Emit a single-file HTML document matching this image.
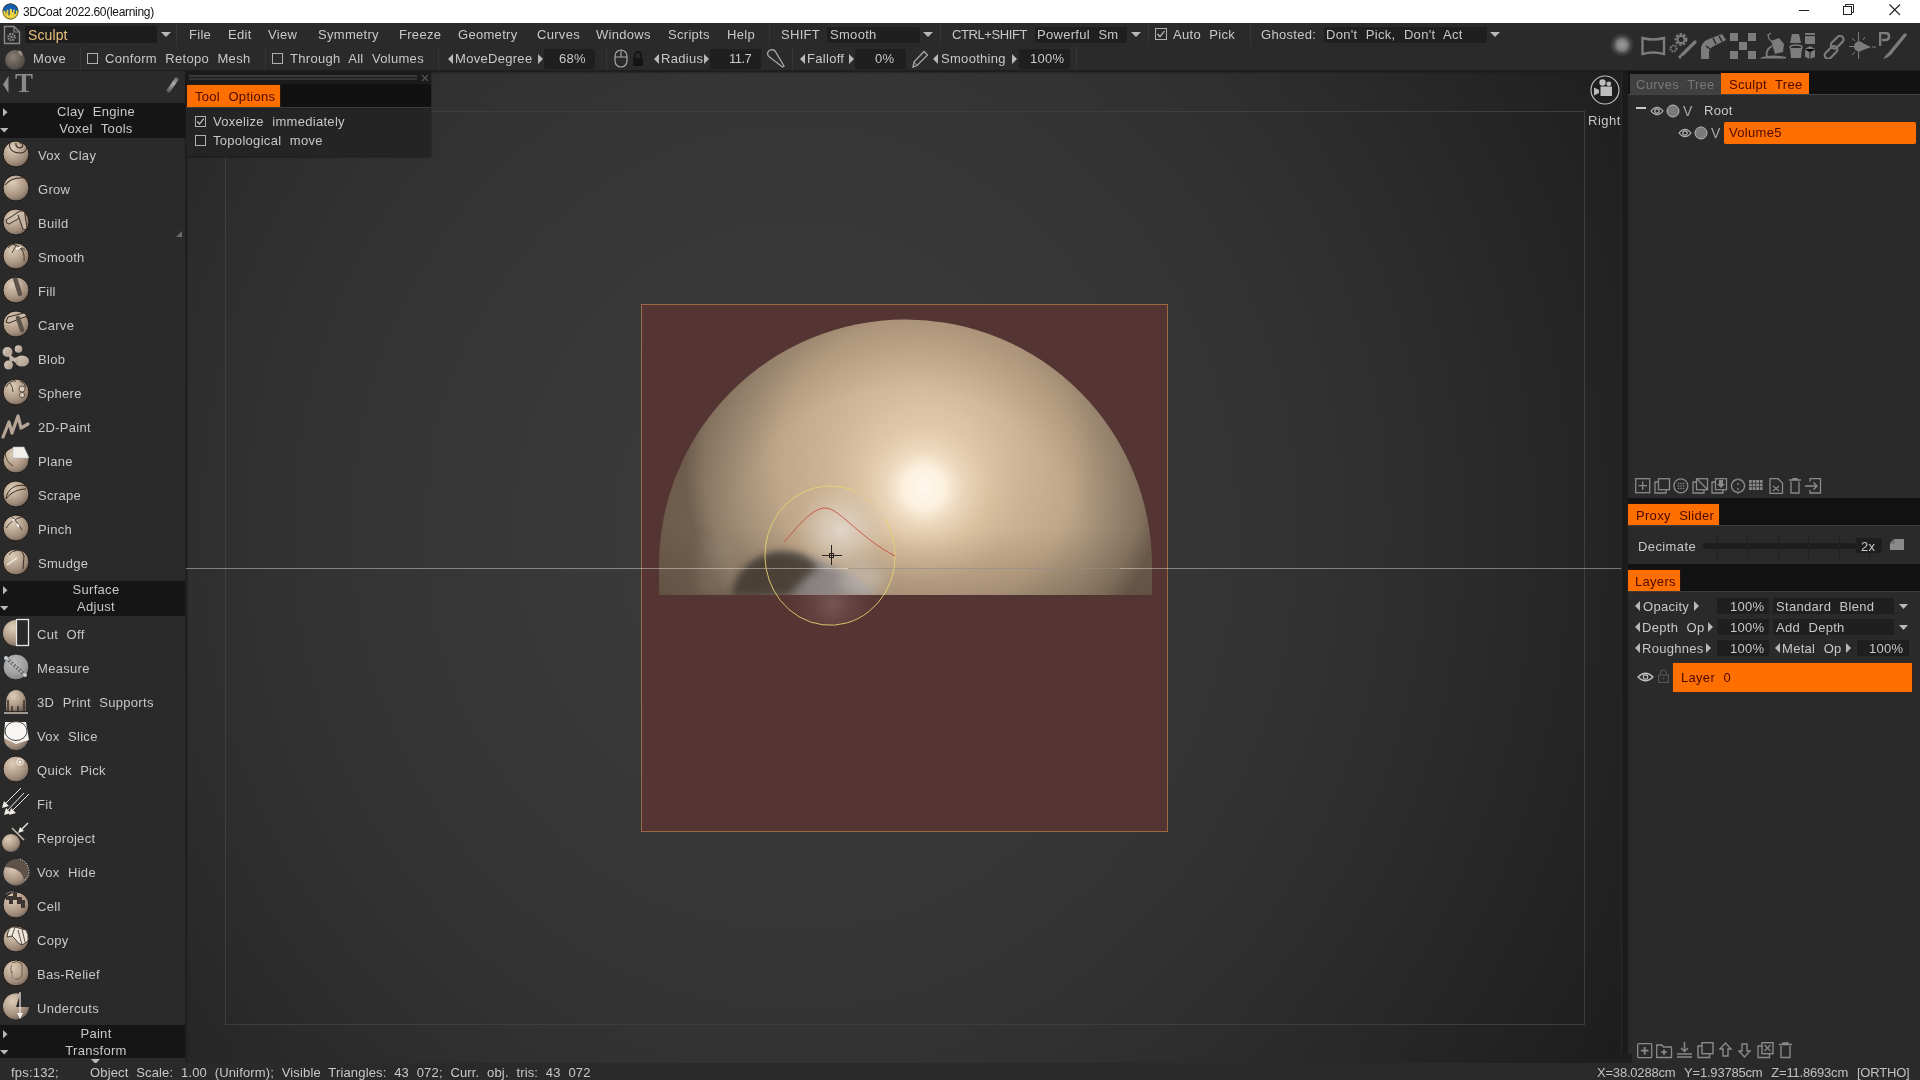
<!DOCTYPE html><html><head><meta charset="utf-8"><style>
html,body{margin:0;padding:0;width:1920px;height:1080px;overflow:hidden;background:#2a2a2a;}
body{position:relative;font-family:"Liberation Sans",sans-serif;}
div,span,svg{position:absolute;box-sizing:border-box;}
.t{white-space:pre;font-size:13px;line-height:14px;color:#c8c8c8;will-change:transform;word-spacing:4.5px;letter-spacing:0.3px;}
.o{color:#4a0800;}
</style></head><body><div style="left:0px;top:0px;width:1920px;height:23px;background:#fff"></div>
<svg style="left:2px;top:3px;" width="17" height="17" viewBox="0 0 17 17"><defs><clipPath id="c1"><circle cx="8.5" cy="8.5" r="8"/></clipPath></defs><g clip-path="url(#c1)"><rect width="17" height="17" fill="#ecd040"/><path d="M0 0H17V8C16.2 8.6 15.5 8.5 15 7.6L14 7.4V10.5C13.7 11.2 13.2 11.2 12.9 10.5V7C12.3 6.6 11.6 6.6 11 7.2V9C10.7 9.6 10.2 9.6 10 9V6.4C9.4 5.6 8.3 5.6 7.6 6.4V11.5C7.3 12.3 6.7 12.3 6.4 11.5V7C5.8 6.5 5 6.6 4.5 7.4V9C4.2 9.6 3.7 9.6 3.4 9V8C2.2 7.6 1 8 0 8.5Z" fill="#1660b4"/><path d="M4 8V11M7 7V13M12.4 8V11" stroke="#5a5020" stroke-width="0.8" opacity="0.7"/></g><circle cx="8.5" cy="8.5" r="7.6" fill="none" stroke="#3a3a20" stroke-width="0.9" opacity="0.8"/></svg>
<span class="t" style="left:23px;top:5px;color:#111;font-size:12px;word-spacing:0;letter-spacing:-0.3px">3DCoat 2022.60(learning)</span>
<div style="left:1799px;top:10px;width:10px;height:1px;background:#222"></div>
<svg style="left:1843px;top:4px;" width="12" height="12" viewBox="0 0 12 12"><rect x="0.5" y="2.5" width="8" height="8" fill="none" stroke="#222"/><path d="M2.5 2.5V0.5H10.5V8.5H8.5" fill="none" stroke="#222"/></svg>
<svg style="left:1889px;top:4px;" width="12" height="12" viewBox="0 0 12 12"><path d="M0.5 0.5L11 11M11 0.5L0.5 11" stroke="#222" stroke-width="1.1"/></svg>
<div style="left:0px;top:23px;width:1920px;height:48px;background:#2a2a2a"></div>
<div style="left:0px;top:70px;width:1920px;height:1px;background:#1e1e1e"></div>
<svg style="left:3px;top:25px;" width="18" height="20" viewBox="0 0 18 20"><path d="M1.5 1.5H11L16.5 7V18.5H1.5Z" fill="none" stroke="#8a8a8a" stroke-width="1.4"/><path d="M11 1.5V7H16.5" fill="none" stroke="#8a8a8a" stroke-width="1.2"/><circle cx="8.5" cy="12" r="3.2" fill="none" stroke="#8a8a8a" stroke-width="2.2" stroke-dasharray="1.6 0.9"/><circle cx="8.5" cy="12" r="1.2" fill="#8a8a8a"/></svg>
<div style="left:25px;top:26px;width:132px;height:17px;background:#1c1c1c;border-radius:2px"></div>
<span class="t" style="left:28px;top:28px;color:#e6c07c;font-size:14px;letter-spacing:0.1px">Sculpt</span>
<svg style="left:161px;top:32px;" width="10" height="6" viewBox="0 0 10 6"><path d="M0 0H10L5 5Z" fill="#b8b8b8"/></svg>
<div style="left:176px;top:24px;width:1px;height:22px;background:#353535"></div>
<span class="t" style="left:189px;top:28px;">File</span>
<span class="t" style="left:228px;top:28px;">Edit</span>
<span class="t" style="left:268px;top:28px;">View</span>
<span class="t" style="left:318px;top:28px;">Symmetry</span>
<span class="t" style="left:399px;top:28px;">Freeze</span>
<span class="t" style="left:458px;top:28px;">Geometry</span>
<span class="t" style="left:537px;top:28px;">Curves</span>
<span class="t" style="left:596px;top:28px;">Windows</span>
<span class="t" style="left:668px;top:28px;">Scripts</span>
<span class="t" style="left:727px;top:28px;">Help</span>
<div style="left:769px;top:24px;width:1px;height:22px;background:#353535"></div>
<span class="t" style="left:781px;top:28px;">SHIFT</span>
<div style="left:827px;top:27px;width:93px;height:16px;background:#1f1f1f;border-radius:2px"></div>
<span class="t" style="left:830px;top:28px;">Smooth</span>
<svg style="left:923px;top:32px;" width="10" height="6" viewBox="0 0 10 6"><path d="M0 0H10L5 5Z" fill="#b8b8b8"/></svg>
<div style="left:940px;top:24px;width:1px;height:22px;background:#353535"></div>
<span class="t" style="left:952px;top:28px;letter-spacing:-0.4px">CTRL+SHIFT</span>
<div style="left:1035px;top:27px;width:92px;height:16px;background:#1f1f1f;border-radius:2px"></div>
<span class="t" style="left:1037px;top:28px;">Powerful Sm</span>
<svg style="left:1131px;top:32px;" width="10" height="6" viewBox="0 0 10 6"><path d="M0 0H10L5 5Z" fill="#b8b8b8"/></svg>
<div style="left:1148px;top:24px;width:1px;height:22px;background:#353535"></div>
<svg style="left:1155px;top:28px;" width="12" height="12" viewBox="0 0 12 12"><rect x="0.5" y="0.5" width="11" height="11" fill="none" stroke="#b0b0b0"/><path d="M2.5 6L5 8.7L9.5 3" fill="none" stroke="#c8c8c8" stroke-width="1.2"/></svg>
<span class="t" style="left:1173px;top:28px;">Auto Pick</span>
<div style="left:1250px;top:24px;width:1px;height:22px;background:#353535"></div>
<span class="t" style="left:1261px;top:28px;">Ghosted:</span>
<div style="left:1324px;top:27px;width:163px;height:16px;background:#1f1f1f;border-radius:2px"></div>
<span class="t" style="left:1326px;top:28px;">Don't Pick, Don't Act</span>
<svg style="left:1490px;top:32px;" width="10" height="6" viewBox="0 0 10 6"><path d="M0 0H10L5 5Z" fill="#b8b8b8"/></svg>
<svg style="left:3px;top:48px;" width="24" height="22" viewBox="0 0 24 22"><defs><radialGradient id="mv" cx="0.4" cy="0.35" r="0.7"><stop offset="0" stop-color="#8b8075"/><stop offset="1" stop-color="#4a4440"/></radialGradient></defs><circle cx="12" cy="12" r="10" fill="url(#mv)"/><path d="M15 3C18 2 20 4 19 8C17 7 15 6 15 3Z" fill="#9a8f85"/></svg>
<span class="t" style="left:33px;top:52px;">Move</span>
<div style="left:80px;top:47px;width:1px;height:23px;background:#353535"></div>
<svg style="left:87px;top:53px;" width="11" height="11" viewBox="0 0 11 11"><rect x="0.5" y="0.5" width="10" height="10" fill="none" stroke="#b0b0b0"/></svg>
<span class="t" style="left:105px;top:52px;">Conform Retopo Mesh</span>
<div style="left:265px;top:47px;width:1px;height:23px;background:#353535"></div>
<svg style="left:272px;top:53px;" width="11" height="11" viewBox="0 0 11 11"><rect x="0.5" y="0.5" width="10" height="10" fill="none" stroke="#b0b0b0"/></svg>
<span class="t" style="left:290px;top:52px;">Through All Volumes</span>
<div style="left:438px;top:47px;width:1px;height:23px;background:#353535"></div>
<svg style="left:448px;top:54px;" width="6" height="10" viewBox="0 0 6 10"><path d="M5 0V10L0 5Z" fill="#b8b8b8"/></svg>
<span class="t" style="left:455px;top:52px;">MoveDegree</span>
<svg style="left:538px;top:54px;" width="6" height="10" viewBox="0 0 6 10"><path d="M0 0V10L5 5Z" fill="#b8b8b8"/></svg>
<div style="left:544px;top:49px;width:51px;height:20px;background:#1f1f1f;border-radius:2px"></div>
<span class="t" style="left:559px;top:52px;">68%</span>
<div style="left:606px;top:47px;width:1px;height:23px;background:#353535"></div>
<svg style="left:614px;top:49px;" width="14" height="19" viewBox="0 0 14 19"><rect x="1" y="1" width="12" height="17" rx="6" fill="none" stroke="#a8a8a8" stroke-width="1.2"/><path d="M7 1V8M1 8H13" stroke="#a8a8a8" stroke-width="1.1"/></svg>
<svg style="left:632px;top:50px;" width="12" height="17" viewBox="0 0 12 17"><path d="M3 8V5A3 3 0 0 1 9 5V8" fill="none" stroke="#141414" stroke-width="1.8"/><rect x="1" y="8" width="10" height="8" fill="#141414"/></svg>
<svg style="left:654px;top:54px;" width="6" height="10" viewBox="0 0 6 10"><path d="M5 0V10L0 5Z" fill="#b8b8b8"/></svg>
<span class="t" style="left:661px;top:52px;">Radius</span>
<svg style="left:704px;top:54px;" width="6" height="10" viewBox="0 0 6 10"><path d="M0 0V10L5 5Z" fill="#b8b8b8"/></svg>
<div style="left:710px;top:49px;width:51px;height:20px;background:#1f1f1f;border-radius:2px"></div>
<span class="t" style="left:729px;top:52px;letter-spacing:-0.5px">11.7</span>
<svg style="left:766px;top:49px;" width="20" height="20" viewBox="0 0 20 20"><path d="M2 3C3 0.5 7 0 9 2L18 17L16.5 18L3.5 8C1.5 6.5 1 5 2 3Z" fill="none" stroke="#a8a8a8" stroke-width="1.3"/></svg>
<div style="left:792px;top:47px;width:1px;height:23px;background:#353535"></div>
<svg style="left:800px;top:54px;" width="6" height="10" viewBox="0 0 6 10"><path d="M5 0V10L0 5Z" fill="#b8b8b8"/></svg>
<span class="t" style="left:807px;top:52px;">Falloff</span>
<svg style="left:849px;top:54px;" width="6" height="10" viewBox="0 0 6 10"><path d="M0 0V10L5 5Z" fill="#b8b8b8"/></svg>
<div style="left:855px;top:49px;width:51px;height:20px;background:#1f1f1f;border-radius:2px"></div>
<span class="t" style="left:875px;top:52px;">0%</span>
<svg style="left:911px;top:49px;" width="18" height="20" viewBox="0 0 18 20"><path d="M2 18L3 13L13 2.5L16.5 6L6 16.5Z" fill="none" stroke="#a8a8a8" stroke-width="1.3"/><path d="M3 13L6 16.5" stroke="#a8a8a8"/></svg>
<svg style="left:933px;top:54px;" width="6" height="10" viewBox="0 0 6 10"><path d="M5 0V10L0 5Z" fill="#b8b8b8"/></svg>
<span class="t" style="left:941px;top:52px;">Smoothing</span>
<svg style="left:1012px;top:54px;" width="6" height="10" viewBox="0 0 6 10"><path d="M0 0V10L5 5Z" fill="#b8b8b8"/></svg>
<div style="left:1019px;top:49px;width:51px;height:20px;background:#1f1f1f;border-radius:2px"></div>
<span class="t" style="left:1030px;top:52px;">100%</span>
<div style="left:1076px;top:47px;width:1px;height:23px;background:#353535"></div>
<div style="left:1610px;top:33px;width:24px;height:24px;border-radius:50%;background:radial-gradient(circle,#9c9c9c 0%,#808080 30%,rgba(90,90,90,0.6) 50%,rgba(60,60,60,0) 72%)"></div>
<svg style="left:1641px;top:36px;" width="25" height="20" viewBox="0 0 25 20"><path d="M1.5 2Q12 5 23 2V18Q12 15 1.5 18Z" fill="none" stroke="#7c7c7c" stroke-width="2.4"/></svg>
<svg style="left:1669px;top:32px;" width="28" height="27" viewBox="0 0 28 27"><circle cx="12" cy="7.5" r="5" fill="none" stroke="#7c7c7c" stroke-width="3" stroke-dasharray="2.2 1.4"/><circle cx="12" cy="7.5" r="3.5" fill="none" stroke="#7c7c7c" stroke-width="2"/><circle cx="4.5" cy="16.5" r="3" fill="none" stroke="#7c7c7c" stroke-width="2.2" stroke-dasharray="1.5 1"/><path d="M26 10L14 22" stroke="#7c7c7c" stroke-width="3.2" stroke-linecap="round"/><path d="M14 21L11 26L10 25Z" fill="#7c7c7c" stroke="#7c7c7c" stroke-width="1.5"/></svg>
<svg style="left:1700px;top:33px;" width="27" height="26" viewBox="0 0 27 26"><path d="M1 26V14Q3 8 9 6L22 1L26 7L14 13Q9 15 9 20V26Z" fill="#7c7c7c"/><path d="M6 13L10 16M13 5L16 11M19 3L22 8.5" stroke="#282828" stroke-width="1.5"/></svg>
<svg style="left:1730px;top:33px;" width="26" height="26" viewBox="0 0 26 26"><rect x="0" y="0" width="8" height="8" fill="#7c7c7c"/><rect x="18" y="0" width="8" height="8" fill="#7c7c7c"/><rect x="9" y="9" width="8" height="8" fill="#7c7c7c"/><rect x="0" y="18" width="8" height="8" fill="#7c7c7c"/><rect x="18" y="18" width="8" height="8" fill="#7c7c7c"/></svg>
<svg style="left:1759px;top:32px;" width="28" height="27" viewBox="0 0 28 27"><path d="M12 9L20 6L25 12L24 20L16 22Z" fill="#7c7c7c"/><path d="M14 10Q9 8 9 2M9 3L12 1" fill="none" stroke="#7c7c7c" stroke-width="1.3"/><path d="M13 14Q6 18 8 25" fill="none" stroke="#7c7c7c" stroke-width="2"/><path d="M1 26.5H27V25Q14 22 3 25Z" fill="#7c7c7c"/></svg>
<svg style="left:1789px;top:32px;" width="27" height="27" viewBox="0 0 27 27"><path d="M3 2H10L12 11H1Z" fill="#7c7c7c"/><path d="M16 1H26V12H16Z" fill="#7c7c7c"/><path d="M16 3.5H26" stroke="#282828" stroke-width="1.2"/><path d="M1 16H13L12 26H2Z" fill="#7c7c7c"/><ellipse cx="7" cy="15.5" rx="6" ry="2.5" fill="none" stroke="#7c7c7c" stroke-width="1.5"/><path d="M16 17L21 14L26 17V25L21 27L16 25Z" fill="#7c7c7c"/><path d="M16 17L21 20L26 17M21 20V27" stroke="#282828" stroke-width="1"/></svg>
<svg style="left:1820px;top:35px;" width="26" height="24" viewBox="0 0 26 24"><rect x="0" y="9" width="15" height="7" rx="3.5" transform="rotate(-45 7.5 12.5) translate(-1 6)" fill="none" stroke="#7c7c7c" stroke-width="2.2"/><rect x="9" y="3" width="15" height="7" rx="3.5" transform="rotate(-45 16.5 6.5) translate(0 1)" fill="none" stroke="#7c7c7c" stroke-width="2.2"/></svg>
<svg style="left:1849px;top:32px;" width="27" height="27" viewBox="0 0 27 27"><path d="M9 9L22 15L9 20Z" fill="#7c7c7c"/><circle cx="10" cy="14.5" r="5" fill="#7c7c7c"/><path d="M9.5 0V27M0 14.5H5M23 15H27M3 6L6 9M3 23L6 20M16 5L14 8" stroke="#7c7c7c" stroke-width="1"/></svg>
<svg style="left:1879px;top:32px;" width="28" height="28" viewBox="0 0 28 28"><path d="M1 14V1H6Q10 1 10 4.5Q10 8 6 8H3" fill="none" stroke="#7c7c7c" stroke-width="2.6"/><path d="M26 3L12 20" stroke="#7c7c7c" stroke-width="3.4" stroke-linecap="round"/><path d="M12 19Q8 21 4 27Q9 26 13 22Z" fill="#7c7c7c"/></svg>
<div style="left:0px;top:71px;width:185px;height:991px;background:#2a2a2a"></div>
<div style="left:185px;top:71px;width:1px;height:991px;background:#202020"></div>
<svg style="left:3px;top:76px;" width="6" height="17" viewBox="0 0 6 17"><path d="M5.5 0V17L0 8.5Z" fill="#8c8c8c"/></svg>
<span class="t" style="left:15px;top:82px;font-family:'Liberation Serif',serif;font-size:27px;font-weight:bold;color:#8a8a8a;letter-spacing:0;line-height:20px;top:73px">T</span>
<div style="left:164px;top:83px;width:17px;height:4px;transform:rotate(-55deg);background:linear-gradient(90deg,#555,#aaa 60%,#666);border-radius:1px"></div>
<div style="left:0px;top:103px;width:185px;height:18px;background:#151515"></div>
<svg style="left:3px;top:108px;" width="5" height="9" viewBox="0 0 5 9"><path d="M0 0V8.5L4.5 4.25Z" fill="#b8b8b8"/></svg>
<span class="t" style="left:0;width:192px;text-align:center;top:105px">Clay Engine</span>
<div style="left:0px;top:120px;width:185px;height:18px;background:#151515"></div>
<svg style="left:0px;top:128px;" width="9" height="5" viewBox="0 0 9 5"><path d="M0 0H8.5L4.25 4.5Z" fill="#b8b8b8"/></svg>
<span class="t" style="left:0;width:192px;text-align:center;top:122px">Voxel Tools</span>
<svg width="0" height="0" style="left:0;top:0"><defs><radialGradient id="sph" cx="0.36" cy="0.28" r="0.8"><stop offset="0" stop-color="#ddcdb8"/><stop offset="0.42" stop-color="#bca894"/><stop offset="0.72" stop-color="#a08c7a"/><stop offset="1" stop-color="#6e6058"/></radialGradient><radialGradient id="sphg" cx="0.4" cy="0.32" r="0.72"><stop offset="0" stop-color="#bcbcbc"/><stop offset="0.7" stop-color="#9c9c9c"/><stop offset="1" stop-color="#7a7a7a"/></radialGradient><linearGradient id="blg" x1="0" y1="0" x2="1" y2="1"><stop offset="0" stop-color="#d8ccbc"/><stop offset="1" stop-color="#a89888"/></linearGradient></defs></svg>
<svg style="left:0px;top:137px;" width="34" height="34" viewBox="0 0 34 34"><circle cx="16" cy="17" r="13" fill="url(#sph)" stroke="#1e1814" stroke-width="1"/><path d="M10 5C8 12 13 16 20 16C26 16 29 10 25 5" fill="none" stroke="#3a2e26" stroke-width="1.1"/><path d="M16 6C15 10 19 12 22 10C24 8 22 5 19 6" fill="none" stroke="#3a2e26" stroke-width="1.1"/></svg>
<span class="t" style="left:38px;top:149px;">Vox Clay</span>
<svg style="left:0px;top:171px;" width="34" height="34" viewBox="0 0 34 34"><circle cx="16" cy="17" r="13" fill="url(#sph)" stroke="#1e1814" stroke-width="1"/><path d="M5 14C9 9 16 6 26 7" fill="none" stroke="#3a2e26" stroke-width="1.1"/></svg>
<span class="t" style="left:38px;top:183px;">Grow</span>
<svg style="left:0px;top:205px;" width="34" height="34" viewBox="0 0 34 34"><circle cx="16" cy="17" r="13" fill="url(#sph)" stroke="#1e1814" stroke-width="1"/><path d="M6 15L20 6Q24 5 25 8L25 10L9 19Q6 19 6 15Z" fill="#cbbba8" stroke="#3a2e26" stroke-width="1"/><path d="M18 10L23 24Q25 26 27 23L25 10" fill="#c4b4a2" stroke="#3a2e26" stroke-width="1"/></svg>
<span class="t" style="left:38px;top:217px;">Build</span>
<svg style="left:0px;top:239px;" width="34" height="34" viewBox="0 0 34 34"><circle cx="16" cy="17" r="13" fill="url(#sph)" stroke="#1e1814" stroke-width="1"/><path d="M8 9Q12 4 16 6L25 11M16 6L12 14M20 9Q25 12 24 22" fill="none" stroke="#3a2e26" stroke-width="0.9"/><path d="M16 10L21 8" stroke="#fff" stroke-width="1.5"/></svg>
<span class="t" style="left:38px;top:251px;">Smooth</span>
<svg style="left:0px;top:273px;" width="34" height="34" viewBox="0 0 34 34"><circle cx="16" cy="17" r="13" fill="url(#sph)" stroke="#1e1814" stroke-width="1"/><path d="M15 5L20 21" stroke="#5e534b" stroke-width="4.5" stroke-linecap="round"/><path d="M13 4L17 4" stroke="#3a2e26" stroke-width="2"/></svg>
<span class="t" style="left:38px;top:285px;">Fill</span>
<svg style="left:0px;top:307px;" width="34" height="34" viewBox="0 0 34 34"><circle cx="16" cy="17" r="13" fill="url(#sph)" stroke="#1e1814" stroke-width="1"/><path d="M6 15L8 10L24 6L27 9L9 16Z" fill="#cbbba8" stroke="#3a2e26" stroke-width="1"/><path d="M18 11L22 23" stroke="#5e534b" stroke-width="4.5" stroke-linecap="round"/></svg>
<span class="t" style="left:38px;top:319px;">Carve</span>
<svg style="left:0px;top:341px;" width="34" height="34" viewBox="0 0 34 34"><g fill="url(#blg)"><circle cx="7.5" cy="11" r="5"/><circle cx="18.5" cy="8" r="3.8"/><ellipse cx="22" cy="20" rx="7" ry="5.5"/><circle cx="8.5" cy="24" r="4.5"/><path d="M9 13L16 18L10 22Z"/><path d="M14 17L18 16L18 23L13 20Z"/></g></svg>
<span class="t" style="left:38px;top:353px;">Blob</span>
<svg style="left:0px;top:375px;" width="34" height="34" viewBox="0 0 34 34"><circle cx="16" cy="17" r="13" fill="url(#sph)" stroke="#1e1814" stroke-width="1"/><path d="M6 12Q10 5 16 6M10 8Q13 12 13 17M20 6Q25 8 26 12" fill="none" stroke="#3a2e26" stroke-width="0.9"/><circle cx="22" cy="14" r="3" fill="#d8ccbc" stroke="#3a2e26" stroke-width="0.7"/><circle cx="22" cy="20" r="2.6" fill="#d8ccbc" stroke="#3a2e26" stroke-width="0.7"/></svg>
<span class="t" style="left:38px;top:387px;">Sphere</span>
<svg style="left:0px;top:409px;" width="34" height="34" viewBox="0 0 34 34"><path d="M3 28L9 13L12 24L18 7L21 19L28 15" fill="none" stroke="#b5a595" stroke-width="3.2" stroke-linejoin="round" stroke-linecap="round"/></svg>
<span class="t" style="left:38px;top:421px;">2D-Paint</span>
<svg style="left:0px;top:443px;" width="34" height="34" viewBox="0 0 34 34"><circle cx="16" cy="17" r="13" fill="url(#sph)" stroke="#1e1814" stroke-width="1"/><path d="M13 4H24L29 15H13Z" fill="#f2eeea" stroke="#bbb" stroke-width="0.6"/><path d="M5 10Q6 19 13 23" fill="none" stroke="#3a2e26" stroke-width="0.8"/></svg>
<span class="t" style="left:38px;top:455px;">Plane</span>
<svg style="left:0px;top:477px;" width="34" height="34" viewBox="0 0 34 34"><circle cx="16" cy="17" r="13" fill="url(#sph)" stroke="#1e1814" stroke-width="1"/><path d="M6 22C7 12 16 6 27 9M6 22C10 16 18 12 26 12" fill="none" stroke="#3a2e26" stroke-width="1"/></svg>
<span class="t" style="left:38px;top:489px;">Scrape</span>
<svg style="left:0px;top:511px;" width="34" height="34" viewBox="0 0 34 34"><circle cx="16" cy="17" r="13" fill="url(#sph)" stroke="#1e1814" stroke-width="1"/><path d="M6 17Q12 8 22 6M11 5Q17 10 22 19" fill="none" stroke="#3a2e26" stroke-width="0.9"/><path d="M12 9L15 9M17 13L19 16" stroke="#fff" stroke-width="1.6"/></svg>
<span class="t" style="left:38px;top:523px;">Pinch</span>
<svg style="left:0px;top:545px;" width="34" height="34" viewBox="0 0 34 34"><circle cx="16" cy="17" r="13" fill="url(#sph)" stroke="#1e1814" stroke-width="1"/><path d="M7 20L17 13" stroke="#f4f0ea" stroke-width="1.3"/><path d="M14 6Q22 3 24 11L23 24" fill="none" stroke="#3a2e26" stroke-width="1"/><path d="M17 5Q11 6 9 10" fill="none" stroke="#3a2e26" stroke-width="0.8"/></svg>
<span class="t" style="left:38px;top:557px;">Smudge</span>
<svg style="left:176px;top:231px;" width="6" height="6" viewBox="0 0 6 6"><path d="M6 0V6H0Z" fill="#6a6a6a"/></svg>
<div style="left:0px;top:581px;width:185px;height:18px;background:#151515"></div>
<svg style="left:3px;top:586px;" width="5" height="9" viewBox="0 0 5 9"><path d="M0 0V8.5L4.5 4.25Z" fill="#b8b8b8"/></svg>
<span class="t" style="left:0;width:192px;text-align:center;top:583px">Surface</span>
<div style="left:0px;top:598px;width:185px;height:18px;background:#151515"></div>
<svg style="left:0px;top:606px;" width="9" height="5" viewBox="0 0 9 5"><path d="M0 0H8.5L4.25 4.5Z" fill="#b8b8b8"/></svg>
<span class="t" style="left:0;width:192px;text-align:center;top:600px">Adjust</span>
<svg style="left:0px;top:616px;" width="34" height="34" viewBox="0 0 34 34"><defs><clipPath id="hcut"><rect x="0" y="0" width="17" height="34"/></clipPath></defs><circle cx="16" cy="17" r="13" fill="url(#sph)" clip-path="url(#hcut)"/><rect x="16.5" y="3.5" width="12" height="26" fill="#2a2a2a" stroke="#ece8e4" stroke-width="1.3"/></svg>
<span class="t" style="left:37px;top:628px;">Cut Off</span>
<svg style="left:0px;top:650px;" width="34" height="34" viewBox="0 0 34 34"><circle cx="16" cy="17" r="13" fill="url(#sphg)" stroke="#1e1e1e" stroke-width="1"/><path d="M6 8L25 25" stroke="#4a4a4a" stroke-width="3" stroke-dasharray="2 1.5"/><path d="M6 8L25 25" stroke="#ddd" stroke-width="0.8"/><circle cx="6" cy="8" r="2" fill="#c8d0d8"/><circle cx="25" cy="25" r="2" fill="#c8d0d8"/></svg>
<span class="t" style="left:37px;top:662px;">Measure</span>
<svg style="left:0px;top:684px;" width="34" height="34" viewBox="0 0 34 34"><path d="M6 18A10 12 0 0 1 26 18V27H6Z" fill="url(#sph)"/><path d="M8 16V27M12 22V27M18 22V27M24 16V27" stroke="#3a302a" stroke-width="1.5"/><path d="M4 29H28" stroke="#c8bcb0" stroke-width="1.5"/></svg>
<span class="t" style="left:37px;top:696px;">3D Print Supports</span>
<svg style="left:0px;top:718px;" width="34" height="34" viewBox="0 0 34 34"><circle cx="16" cy="20" r="12" fill="url(#sph)"/><path d="M5 4H26L29 22L16 26L4 20Z" fill="#f4f2ee"/><ellipse cx="16" cy="13" rx="11" ry="9.5" fill="#f8f6f4" stroke="#4a4440" stroke-width="1"/></svg>
<span class="t" style="left:37px;top:730px;">Vox Slice</span>
<svg style="left:0px;top:752px;" width="34" height="34" viewBox="0 0 34 34"><circle cx="16" cy="17" r="13" fill="url(#sph)" stroke="#1e1814" stroke-width="1"/><circle cx="20" cy="10" r="3.3" fill="none" stroke="#f4ece4" stroke-width="1"/><circle cx="20" cy="10" r="1.6" fill="#f4ece4"/></svg>
<span class="t" style="left:37px;top:764px;">Quick Pick</span>
<svg style="left:0px;top:786px;" width="34" height="34" viewBox="0 0 34 34"><path d="M21 2L3 20M24 7L5 27M29 8L10 27" stroke="#f0ece6" stroke-width="1"/><path d="M2 22L4 15L9 20Z M4 29L6 22L11 27Z M9 29L11 22L16 27Z" fill="#f0ece6"/></svg>
<span class="t" style="left:37px;top:798px;">Fit</span>
<svg style="left:0px;top:820px;" width="34" height="34" viewBox="0 0 34 34"><circle cx="11" cy="23" r="9" fill="url(#sph)"/><path d="M12 8L24 20" stroke="#c8bcb0" stroke-width="1.5"/><path d="M28 3L20 11" stroke="#f0ece6" stroke-width="1.3"/><path d="M18 13L20 7L24 11Z" fill="#f0ece6"/></svg>
<span class="t" style="left:37px;top:832px;">Reproject</span>
<svg style="left:0px;top:854px;" width="34" height="34" viewBox="0 0 34 34"><circle cx="16" cy="19" r="12.5" fill="url(#sph)"/><path d="M5 13Q9 4 20 5Q29 8 29 19Q28 25 24 26Q22 14 5 13Z" fill="#5e5148"/><path d="M20 5Q29 8 29 19Q28 25 24 26" fill="none" stroke="#bbb" stroke-width="1.2" stroke-dasharray="1 1.5"/></svg>
<span class="t" style="left:37px;top:866px;">Vox Hide</span>
<svg style="left:0px;top:888px;" width="34" height="34" viewBox="0 0 34 34"><circle cx="16" cy="17" r="13" fill="url(#sph)" stroke="#1e1814" stroke-width="1"/><path d="M8 8H13V5H17V9H22V12H25V20H21V16H17V12H13V16H9V12H6V9Z" fill="#3e3430"/><path d="M6 6Q10 3 14 4" stroke="#888" stroke-width="1"/></svg>
<span class="t" style="left:37px;top:900px;">Cell</span>
<svg style="left:0px;top:922px;" width="34" height="34" viewBox="0 0 34 34"><circle cx="16" cy="17" r="13" fill="url(#sph)" stroke="#1e1814" stroke-width="1"/><path d="M8 10Q10 4 15 5L26 8Q29 12 28 19L22 23Q18 22 16 18L12 14L7 15Z" fill="#ede6da" stroke="#3a2e26" stroke-width="0.9"/><path d="M15 5L12 14M18 8L22 23M22 7L25 20" stroke="#3a2e26" stroke-width="0.8"/></svg>
<span class="t" style="left:37px;top:934px;">Copy</span>
<svg style="left:0px;top:956px;" width="34" height="34" viewBox="0 0 34 34"><circle cx="16" cy="17" r="13" fill="url(#sph)" stroke="#1e1814" stroke-width="1"/><path d="M12 7Q17 4 21 7Q23 10 22 15L22 20Q20 24 15 23M12 9Q9 14 13 17" fill="none" stroke="#6a5c50" stroke-width="1"/><path d="M11 15Q12 19 13 23" stroke="#8a7c70" stroke-width="1"/></svg>
<span class="t" style="left:37px;top:968px;">Bas-Relief</span>
<svg style="left:0px;top:990px;" width="34" height="34" viewBox="0 0 34 34"><path d="M16 17L20 4A13 13 0 1 0 29 17Z" fill="url(#sph)"/><path d="M20 2V26" stroke="#f0ece6" stroke-width="1.2"/><path d="M17 23L20 29L23 23Z" fill="#f0ece6"/></svg>
<span class="t" style="left:37px;top:1002px;">Undercuts</span>
<div style="left:0px;top:1025px;width:185px;height:18px;background:#151515"></div>
<svg style="left:3px;top:1030px;" width="5" height="9" viewBox="0 0 5 9"><path d="M0 0V8.5L4.5 4.25Z" fill="#b8b8b8"/></svg>
<span class="t" style="left:0;width:192px;text-align:center;top:1027px">Paint</span>
<div style="left:0px;top:1042px;width:185px;height:16px;background:#151515"></div>
<svg style="left:0px;top:1050px;" width="9" height="5" viewBox="0 0 9 5"><path d="M0 0H8.5L4.25 4.5Z" fill="#b8b8b8"/></svg>
<span class="t" style="left:0;width:192px;text-align:center;top:1044px">Transform</span>
<svg style="left:91px;top:1059px;" width="9" height="5" viewBox="0 0 9 5"><path d="M0 0H9L4.5 5Z" fill="#b8b8b8"/></svg>
<div style="left:186px;top:71px;width:1435px;height:992px;background:radial-gradient(ellipse 1020px 1108px at 609px 457px,#3a3a3a 0%,#3a3a3a 10%,#393939 20%,#373737 30%,#353535 40%,#323232 50%,#2e2e2e 60%,#292929 70%,#242424 80%,#1f1f1f 90%,#181818 100%)"></div>
<div style="left:186px;top:71px;width:1435px;height:3px;background:linear-gradient(#1c1c1c,rgba(30,30,30,0))"></div>
<div style="left:225px;top:111px;width:1360px;height:914px;border:1px solid #3e3e3e"></div>
<div style="left:186px;top:71px;width:2px;height:992px;background:linear-gradient(90deg,#1c1c1c,#282828)"></div>
<div style="left:1622px;top:71px;width:6px;height:992px;background:#1b1b1b"></div>
<div style="left:641px;top:304px;width:527px;height:528px;background:#553533;border:1px solid #9a6a40"></div>
<svg style="left:641px;top:304px;" width="527" height="528" viewBox="0 0 527 528"><defs><radialGradient id="hb" cx="284" cy="161" r="240" gradientUnits="userSpaceOnUse"><stop offset="0" stop-color="#e6ccb0"/><stop offset="0.23" stop-color="#dcc2a6"/><stop offset="0.33" stop-color="#d4ba9c"/><stop offset="0.44" stop-color="#ccb294"/><stop offset="0.62" stop-color="#bfa689"/><stop offset="0.7" stop-color="#b09a80"/><stop offset="0.8" stop-color="#a28e77"/><stop offset="0.92" stop-color="#907e69"/><stop offset="1" stop-color="#766554"/></radialGradient><linearGradient id="bot" x1="0" y1="225" x2="0" y2="291" gradientUnits="userSpaceOnUse"><stop offset="0" stop-color="#3a2a20" stop-opacity="0"/><stop offset="1" stop-color="#3a2a20" stop-opacity="0.2"/></linearGradient><radialGradient id="rim" cx="264" cy="262" r="247" gradientUnits="userSpaceOnUse"><stop offset="0.72" stop-color="#3c2c22" stop-opacity="0"/><stop offset="1" stop-color="#3c2c22" stop-opacity="0.16"/></radialGradient><radialGradient id="hh" cx="283" cy="184" r="95" gradientUnits="userSpaceOnUse"><stop offset="0" stop-color="#fff8ec"/><stop offset="0.22" stop-color="#fdf2e0" stop-opacity="0.97"/><stop offset="0.42" stop-color="#f2dec4" stop-opacity="0.65"/><stop offset="0.7" stop-color="#e4cca8" stop-opacity="0.25"/><stop offset="1" stop-color="#d8c0a0" stop-opacity="0"/></radialGradient><radialGradient id="hw" cx="200" cy="226" r="46" gradientUnits="userSpaceOnUse"><stop offset="0" stop-color="#e2d8cc" stop-opacity="0.95"/><stop offset="0.55" stop-color="#d8cab8" stop-opacity="0.6"/><stop offset="1" stop-color="#d0c0ac" stop-opacity="0"/></radialGradient><radialGradient id="hp" cx="192" cy="300" r="55" gradientUnits="userSpaceOnUse"><stop offset="0" stop-color="#7a5a56" stop-opacity="0.9"/><stop offset="1" stop-color="#5a3834" stop-opacity="0"/></radialGradient><linearGradient id="wg" x1="95" y1="0" x2="240" y2="0" gradientUnits="userSpaceOnUse"><stop offset="0" stop-color="#5a5048"/><stop offset="0.5" stop-color="#868080"/><stop offset="1" stop-color="#a09894"/></linearGradient><filter id="bl2" x="-50%" y="-50%" width="200%" height="200%"><feGaussianBlur stdDeviation="3"/></filter><filter id="bl4" x="-50%" y="-50%" width="200%" height="200%"><feGaussianBlur stdDeviation="4"/></filter><filter id="bl6" x="-50%" y="-50%" width="200%" height="200%"><feGaussianBlur stdDeviation="7"/></filter><clipPath id="hc"><path d="M18 262A246 246 0 0 1 511 262V291H18Z"/></clipPath><clipPath id="cc"><ellipse cx="189" cy="251.5" rx="64" ry="69"/></clipPath></defs><g clip-path="url(#hc)"><rect width="527" height="528" fill="url(#hb)"/><rect width="527" height="528" fill="url(#rim)"/><rect width="527" height="528" fill="url(#bot)"/><rect width="527" height="528" fill="url(#hh)"/><rect x="58" y="236" width="36" height="56" fill="#9a8c7c" opacity="0.3" filter="url(#bl6)"/><path d="M92 292C95 272 108 254 133 249C160 246 185 258 206 268C220 275 230 284 238 292Z" fill="url(#wg)" filter="url(#bl2)"/><path d="M92 292C94 275 105 256 133 249C150 246 165 252 178 262C168 270 155 282 148 292Z" fill="#463c32" opacity="0.9" filter="url(#bl4)"/><ellipse cx="222" cy="274" rx="22" ry="16" fill="#cec6c0" opacity="0.5" filter="url(#bl6)"/><rect width="527" height="528" fill="url(#hw)"/></g><path d="M240 292H508" stroke="#4a3830" stroke-width="1.6" stroke-dasharray="7 1 9 2 5 1" opacity="0.7"/><g clip-path="url(#cc)"><rect x="0" y="291" width="527" height="60" fill="url(#hp)"/></g></svg>
<div style="left:186px;top:568px;width:1435px;height:1px;background:rgba(255,255,255,0.39)"></div>
<div style="left:848px;top:568px;width:272px;height:1px;background:rgba(70,60,50,0.35)"></div>
<svg style="left:760px;top:480px;" width="140" height="150" viewBox="0 0 140 150"><path d="M124.5 37.6A65 69.5 0 0 1 20.2 120.2A65 69.5 0 0 1 97.5 12.5" fill="none" stroke="#e4d470" stroke-width="1" opacity="0.9"/><path d="M105.4 17.2A65 69.5 0 0 1 112.6 23.0" fill="none" stroke="#e4d470" stroke-width="1" opacity="0.9"/><path d="M24 62C35 50 52 27 66 28C80 29 100 58 135 76" fill="none" stroke="#c84030" stroke-width="0.9" opacity="0.9"/></svg>
<svg style="left:821px;top:544px;" width="23" height="23" viewBox="0 0 23 23"><path d="M10.5 1V21M1 11.5H21" stroke="#2a2220" stroke-width="1"/><rect x="8.5" y="9.5" width="4" height="4" fill="none" stroke="#2a2220" stroke-width="1"/></svg>
<div style="left:186px;top:72px;width:245px;height:84px;background:#242424;box-shadow:0 1px 2px rgba(0,0,0,0.5)"></div>
<div style="left:186px;top:72px;width:245px;height:12px;background:#1b1b1b"></div>
<div style="left:189px;top:75px;width:228px;height:2px;background:#3a3a3a"></div>
<div style="left:189px;top:78px;width:228px;height:2px;background:#333"></div>
<svg style="left:420px;top:73px;" width="10" height="10" viewBox="0 0 10 10"><path d="M2 2L8 8M8 2L2 8" stroke="#555" stroke-width="1.2"/></svg>
<div style="left:186px;top:84px;width:245px;height:23px;background:#111"></div>
<div style="left:187px;top:85px;width:93px;height:22px;background:#ff6f00;box-shadow:0 0 1px #a04000"></div>
<span class="t" style="left:195px;top:90px;color:#4a0800">Tool Options</span>
<div style="left:186px;top:107px;width:245px;height:1px;background:#3a3a3a"></div>
<svg style="left:195px;top:116px;" width="11" height="11" viewBox="0 0 11 11"><rect x="0.5" y="0.5" width="10" height="10" fill="none" stroke="#b0b0b0"/><path d="M2.3 5.5L4.5 8L8.8 2.6" fill="none" stroke="#c8c8c8" stroke-width="1.2"/></svg>
<span class="t" style="left:213px;top:115px;">Voxelize immediately</span>
<svg style="left:195px;top:135px;" width="11" height="11" viewBox="0 0 11 11"><rect x="0.5" y="0.5" width="10" height="10" fill="none" stroke="#b0b0b0"/></svg>
<span class="t" style="left:213px;top:134px;">Topological move</span>
<div style="left:1628px;top:71px;width:292px;height:992px;background:#2a2a2a"></div>
<svg style="left:1589px;top:75px;" width="32" height="32" viewBox="0 0 32 32"><circle cx="16" cy="15" r="14" fill="#1e1e1e" stroke="#bdbdbd" stroke-width="1.2"/><circle cx="13.5" cy="7.5" r="3.2" fill="#bdbdbd"/><circle cx="19.8" cy="8.8" r="2.4" fill="#bdbdbd"/><rect x="11.5" y="11.5" width="11.5" height="9.5" fill="#bdbdbd"/><path d="M5 12.5L10 15V18L5 20.5Z" fill="#bdbdbd"/></svg>
<span class="t" style="left:1588px;top:114px;letter-spacing:0.5px">Right</span>
<div style="left:1628px;top:71px;width:292px;height:24px;background:#121212"></div>
<div style="left:1630px;top:74px;width:91px;height:21px;background:#404040"></div>
<span class="t" style="left:1636px;top:78px;color:#777">Curves Tree</span>
<div style="left:1721px;top:73px;width:88px;height:22px;background:#ff6f00"></div>
<span class="t" style="left:1729px;top:78px;color:#4a0800">Sculpt Tree</span>
<div style="left:1628px;top:94px;width:292px;height:1px;background:#444"></div>
<div style="left:1636px;top:107px;width:10px;height:2px;background:#c8c8c8"></div>
<svg style="left:1650px;top:106px;" width="14" height="10" viewBox="0 0 14 10"><path d="M1 5Q7.0 -2.5 13 5Q7.0 12.5 1 5Z" fill="none" stroke="#b8b8b8" stroke-width="1.2"/><circle cx="7.0" cy="5" r="2.2" fill="none" stroke="#b8b8b8" stroke-width="1.2"/></svg>
<svg style="left:1666px;top:104px;" width="14" height="14" viewBox="0 0 14 14"><circle cx="7" cy="7" r="6" fill="#7a7a7a" stroke="#b8b8b8" stroke-width="1"/></svg>
<span class="t" style="left:1683px;top:104px;font-size:14px;color:#aaa">V</span>
<span class="t" style="left:1704px;top:104px;">Root</span>
<svg style="left:1678px;top:128px;" width="14" height="10" viewBox="0 0 14 10"><path d="M1 5Q7.0 -2.5 13 5Q7.0 12.5 1 5Z" fill="none" stroke="#b8b8b8" stroke-width="1.2"/><circle cx="7.0" cy="5" r="2.2" fill="none" stroke="#b8b8b8" stroke-width="1.2"/></svg>
<svg style="left:1694px;top:126px;" width="14" height="14" viewBox="0 0 14 14"><circle cx="7" cy="7" r="6" fill="#7a7a7a" stroke="#b8b8b8" stroke-width="1"/></svg>
<span class="t" style="left:1711px;top:126px;font-size:14px;color:#aaa">V</span>
<div style="left:1724px;top:122px;width:192px;height:22px;background:#ff6f00;border-radius:2px;box-shadow:0 0 1px #803000"></div>
<span class="t" style="left:1729px;top:126px;color:#4a0800">Volume5</span>
<svg style="left:1635px;top:478px;" width="17" height="16" viewBox="0 0 17 16"><rect x="0.7" y="0.7" width="14" height="14" fill="none" stroke="#8a8a8a" stroke-width="1.3"/><path d="M7.7 3.5V12M3.5 7.7H12" stroke="#8a8a8a" stroke-width="1.3"/></svg>
<svg style="left:1654px;top:478px;" width="17" height="16" viewBox="0 0 17 16"><rect x="4.5" y="0.7" width="11" height="11" fill="none" stroke="#8a8a8a" stroke-width="1.3"/><path d="M4.5 4H1V15H12V11.5" fill="none" stroke="#8a8a8a" stroke-width="1.3"/></svg>
<svg style="left:1673px;top:478px;" width="17" height="16" viewBox="0 0 17 16"><circle cx="7.8" cy="7.8" r="7" fill="none" stroke="#8a8a8a" stroke-width="1.3"/><g fill="#8a8a8a"><circle cx="5.5" cy="5.5" r="0.8"/><circle cx="8" cy="5.5" r="0.8"/><circle cx="10.5" cy="5.5" r="0.8"/><circle cx="5.5" cy="8" r="0.8"/><circle cx="8" cy="8" r="0.8"/><circle cx="10.5" cy="8" r="0.8"/><circle cx="5.5" cy="10.5" r="0.8"/><circle cx="8" cy="10.5" r="0.8"/><circle cx="10.5" cy="10.5" r="0.8"/></g></svg>
<svg style="left:1692px;top:478px;" width="17" height="16" viewBox="0 0 17 16"><rect x="4.5" y="0.7" width="11" height="11" fill="none" stroke="#8a8a8a" stroke-width="1.3"/><path d="M4.5 4H1V15H12V11.5M5 1L15 11" fill="none" stroke="#8a8a8a" stroke-width="1.3"/></svg>
<svg style="left:1711px;top:478px;" width="17" height="16" viewBox="0 0 17 16"><rect x="4.5" y="0.7" width="11" height="11" fill="none" stroke="#8a8a8a" stroke-width="1.3"/><path d="M4.5 4H1V15H12V11.5" fill="none" stroke="#8a8a8a" stroke-width="1.3"/><path d="M8 2V6H6L10 10L14 6H12V2Z" fill="#8a8a8a"/></svg>
<svg style="left:1730px;top:478px;" width="17" height="16" viewBox="0 0 17 16"><path d="M7 1.5A6.5 6.5 0 1 0 9 1.5" fill="none" stroke="#8a8a8a" stroke-width="1.3"/><path d="M8 0V16M8 5V11" stroke="#8a8a8a" stroke-width="1.3" stroke-dasharray="2 3"/></svg>
<svg style="left:1749px;top:478px;" width="17" height="16" viewBox="0 0 17 16"><rect x="0.0" y="2.0" width="2.8" height="2.8" fill="#8a8a8a"/><rect x="3.6" y="2.0" width="2.8" height="2.8" fill="#8a8a8a"/><rect x="7.2" y="2.0" width="2.8" height="2.8" fill="#8a8a8a"/><rect x="10.8" y="2.0" width="2.8" height="2.8" fill="#8a8a8a"/><rect x="0.0" y="5.6" width="2.8" height="2.8" fill="#8a8a8a"/><rect x="3.6" y="5.6" width="2.8" height="2.8" fill="#8a8a8a"/><rect x="7.2" y="5.6" width="2.8" height="2.8" fill="#8a8a8a"/><rect x="10.8" y="5.6" width="2.8" height="2.8" fill="#8a8a8a"/><rect x="0.0" y="9.2" width="2.8" height="2.8" fill="#8a8a8a"/><rect x="3.6" y="9.2" width="2.8" height="2.8" fill="#8a8a8a"/><rect x="7.2" y="9.2" width="2.8" height="2.8" fill="#8a8a8a"/><rect x="10.8" y="9.2" width="2.8" height="2.8" fill="#8a8a8a"/></svg>
<svg style="left:1769px;top:478px;" width="17" height="16" viewBox="0 0 17 16"><path d="M1 0.7H9L13.5 5V15.3H1Z" fill="none" stroke="#8a8a8a" stroke-width="1.3"/><path d="M4 8L10 13M10 8L4 13" stroke="#8a8a8a" stroke-width="1.2"/></svg>
<svg style="left:1789px;top:478px;" width="17" height="16" viewBox="0 0 17 16"><path d="M0 2H12M4 2V0.7H8V2M2 3.5V15H10V3.5" fill="none" stroke="#8a8a8a" stroke-width="1.3"/></svg>
<svg style="left:1805px;top:478px;" width="17" height="16" viewBox="0 0 17 16"><path d="M5 3.5V0.7H15.5V15H5V12" fill="none" stroke="#8a8a8a" stroke-width="1.3"/><path d="M0 8H12M8.5 4.5L12 8L8.5 11.5" fill="none" stroke="#8a8a8a" stroke-width="1.5"/></svg>
<div style="left:1628px;top:498px;width:292px;height:28px;background:#121212"></div>
<div style="left:1628px;top:504px;width:91px;height:22px;background:#ff6f00;box-shadow:0 0 1px #803000"></div>
<span class="t" style="left:1636px;top:509px;color:#4a0800">Proxy Slider</span>
<div style="left:1628px;top:525px;width:292px;height:1px;background:#3c3c3c"></div>
<span class="t" style="left:1638px;top:540px;letter-spacing:0.4px">Decimate</span>
<div style="left:1703px;top:543px;width:153px;height:6px;background:#1d1d1d;border-radius:3px"></div>
<div style="left:1717px;top:534px;width:1px;height:24px;background:#1f1f1f"></div>
<div style="left:1747px;top:534px;width:1px;height:24px;background:#1f1f1f"></div>
<div style="left:1778px;top:534px;width:1px;height:24px;background:#1f1f1f"></div>
<div style="left:1808px;top:534px;width:1px;height:24px;background:#1f1f1f"></div>
<div style="left:1839px;top:534px;width:1px;height:24px;background:#1f1f1f"></div>
<div style="left:1869px;top:534px;width:1px;height:24px;background:#1f1f1f"></div>
<div style="left:1856px;top:538px;width:26px;height:15px;background:#1e1e1e"></div>
<span class="t" style="left:1861px;top:540px;">2x</span>
<svg style="left:1890px;top:539px;" width="14" height="11" viewBox="0 0 14 11"><path d="M4 0H14V11H0V4Z" fill="#8a8a8a"/><path d="M0 4H4V0" fill="none" stroke="#555" stroke-width="0.8"/></svg>
<div style="left:1628px;top:564px;width:292px;height:28px;background:#121212"></div>
<div style="left:1628px;top:570px;width:52px;height:22px;background:#ff6f00;box-shadow:0 0 1px #803000"></div>
<span class="t" style="left:1635px;top:575px;color:#4a0800">Layers</span>
<div style="left:1628px;top:591px;width:292px;height:1px;background:#3c3c3c"></div>
<svg style="left:1635px;top:601px;" width="6" height="10" viewBox="0 0 6 10"><path d="M5 0V10L0 5Z" fill="#b8b8b8"/></svg>
<span class="t" style="left:1643px;top:600px;">Opacity</span>
<svg style="left:1694px;top:601px;" width="6" height="10" viewBox="0 0 6 10"><path d="M0 0V10L5 5Z" fill="#b8b8b8"/></svg>
<div style="left:1717px;top:598px;width:52px;height:16px;background:#1f1f1f"></div>
<span class="t" style="left:1730px;top:600px;">100%</span>
<div style="left:1773px;top:598px;width:121px;height:16px;background:#1f1f1f"></div>
<span class="t" style="left:1776px;top:600px;">Standard Blend</span>
<svg style="left:1899px;top:604px;" width="9" height="5" viewBox="0 0 9 5"><path d="M0 0H9L4.5 5Z" fill="#b8b8b8"/></svg>
<svg style="left:1635px;top:622px;" width="6" height="10" viewBox="0 0 6 10"><path d="M5 0V10L0 5Z" fill="#b8b8b8"/></svg>
<span class="t" style="left:1642px;top:621px;">Depth Op</span>
<svg style="left:1708px;top:622px;" width="6" height="10" viewBox="0 0 6 10"><path d="M0 0V10L5 5Z" fill="#b8b8b8"/></svg>
<div style="left:1717px;top:619px;width:52px;height:16px;background:#1f1f1f"></div>
<span class="t" style="left:1730px;top:621px;">100%</span>
<div style="left:1773px;top:619px;width:121px;height:16px;background:#1f1f1f"></div>
<span class="t" style="left:1776px;top:621px;">Add Depth</span>
<svg style="left:1899px;top:625px;" width="9" height="5" viewBox="0 0 9 5"><path d="M0 0H9L4.5 5Z" fill="#b8b8b8"/></svg>
<svg style="left:1635px;top:643px;" width="6" height="10" viewBox="0 0 6 10"><path d="M5 0V10L0 5Z" fill="#b8b8b8"/></svg>
<span class="t" style="left:1642px;top:642px;">Roughnes</span>
<svg style="left:1706px;top:643px;" width="6" height="10" viewBox="0 0 6 10"><path d="M0 0V10L5 5Z" fill="#b8b8b8"/></svg>
<div style="left:1717px;top:640px;width:52px;height:16px;background:#1f1f1f"></div>
<span class="t" style="left:1730px;top:642px;">100%</span>
<svg style="left:1775px;top:643px;" width="6" height="10" viewBox="0 0 6 10"><path d="M5 0V10L0 5Z" fill="#b8b8b8"/></svg>
<span class="t" style="left:1782px;top:642px;">Metal Op</span>
<svg style="left:1846px;top:643px;" width="6" height="10" viewBox="0 0 6 10"><path d="M0 0V10L5 5Z" fill="#b8b8b8"/></svg>
<div style="left:1857px;top:640px;width:52px;height:16px;background:#1f1f1f"></div>
<span class="t" style="left:1869px;top:642px;">100%</span>
<svg style="left:1637px;top:672px;" width="17" height="10" viewBox="0 0 17 10"><path d="M1 5Q8.5 -2.5 16 5Q8.5 12.5 1 5Z" fill="none" stroke="#c0c0c0" stroke-width="1.2"/><circle cx="8.5" cy="5" r="2.2" fill="none" stroke="#c0c0c0" stroke-width="1.2"/></svg>
<svg style="left:1658px;top:669px;" width="11" height="14" viewBox="0 0 11 14"><path d="M2.5 6V4A3 3 0 0 1 8.5 4V6" fill="none" stroke="#555" stroke-width="1.2"/><rect x="0.6" y="6" width="9.8" height="7.5" fill="none" stroke="#555" stroke-width="1.2"/><circle cx="5.5" cy="9.5" r="0.9" fill="#555"/></svg>
<div style="left:1673px;top:663px;width:239px;height:29px;background:#ff6f00;box-shadow:0 0 1px #803000"></div>
<span class="t" style="left:1681px;top:671px;color:#4a0800">Layer 0</span>
<svg style="left:1637px;top:1042px;" width="17" height="17" viewBox="0 0 17 17"><rect x="0.7" y="1.7" width="14" height="14" rx="1" fill="none" stroke="#8a8a8a" stroke-width="1.3"/><path d="M7.7 5V12.5M4 8.7H11.5" stroke="#8a8a8a" stroke-width="1.8"/></svg>
<svg style="left:1656px;top:1042px;" width="17" height="17" viewBox="0 0 17 17"><path d="M0.7 3H6L7.5 5H15.5V15.5H0.7Z" fill="none" stroke="#8a8a8a" stroke-width="1.3"/><path d="M8 7.5V13M5.3 10.2H10.7" stroke="#8a8a8a" stroke-width="1.7"/></svg>
<svg style="left:1677px;top:1042px;" width="17" height="17" viewBox="0 0 17 17"><path d="M7.5 0V9M4 6L7.5 9.5L11 6" fill="none" stroke="#8a8a8a" stroke-width="1.5"/><path d="M0 12H15M0 15H15" stroke="#8a8a8a" stroke-width="1.5"/></svg>
<svg style="left:1697px;top:1042px;" width="17" height="17" viewBox="0 0 17 17"><rect x="5" y="0.7" width="11" height="11" fill="none" stroke="#8a8a8a" stroke-width="1.4"/><path d="M5 4H1V15.5H12.5V11.5" fill="none" stroke="#8a8a8a" stroke-width="1.4"/></svg>
<svg style="left:1719px;top:1042px;" width="17" height="17" viewBox="0 0 17 17"><path d="M6.5 1L12 7H9V14H4V7H1Z" fill="none" stroke="#8a8a8a" stroke-width="1.4"/></svg>
<svg style="left:1738px;top:1042px;" width="17" height="17" viewBox="0 0 17 17"><path d="M6.5 15L12 9H9V2H4V9H1Z" fill="none" stroke="#8a8a8a" stroke-width="1.4"/></svg>
<svg style="left:1757px;top:1042px;" width="17" height="17" viewBox="0 0 17 17"><rect x="5" y="0.7" width="11" height="11" fill="none" stroke="#8a8a8a" stroke-width="1.4"/><path d="M5 4H1V15.5H12.5V11.5M7.5 3L13.5 9M13.5 3L7.5 9" fill="none" stroke="#8a8a8a" stroke-width="1.3"/></svg>
<svg style="left:1779px;top:1042px;" width="17" height="17" viewBox="0 0 17 17"><path d="M0 2.5H13M4 2.5V1H9V2.5M2 4V15.5H11V4" fill="none" stroke="#8a8a8a" stroke-width="1.4"/></svg>
<div style="left:1586px;top:1054px;width:46px;height:10px;background:#1e1e1e"></div>
<div style="left:0px;top:1063px;width:1920px;height:17px;background:#2a2a2a"></div>
<span class="t" style="left:11px;top:1066px;letter-spacing:0.2px">fps:132;</span>
<span class="t" style="left:90px;top:1066px;letter-spacing:0.15px;word-spacing:4px">Object Scale: 1.00 (Uniform); Visible Triangles: 43 072; Curr. obj. tris: 43 072</span>
<span class="t" style="left:1597px;top:1066px;letter-spacing:-0.2px;word-spacing:5.5px;color:#c0c0c0">X=38.0288cm Y=1.93785cm Z=11.8693cm [ORTHO]</span></body></html>
